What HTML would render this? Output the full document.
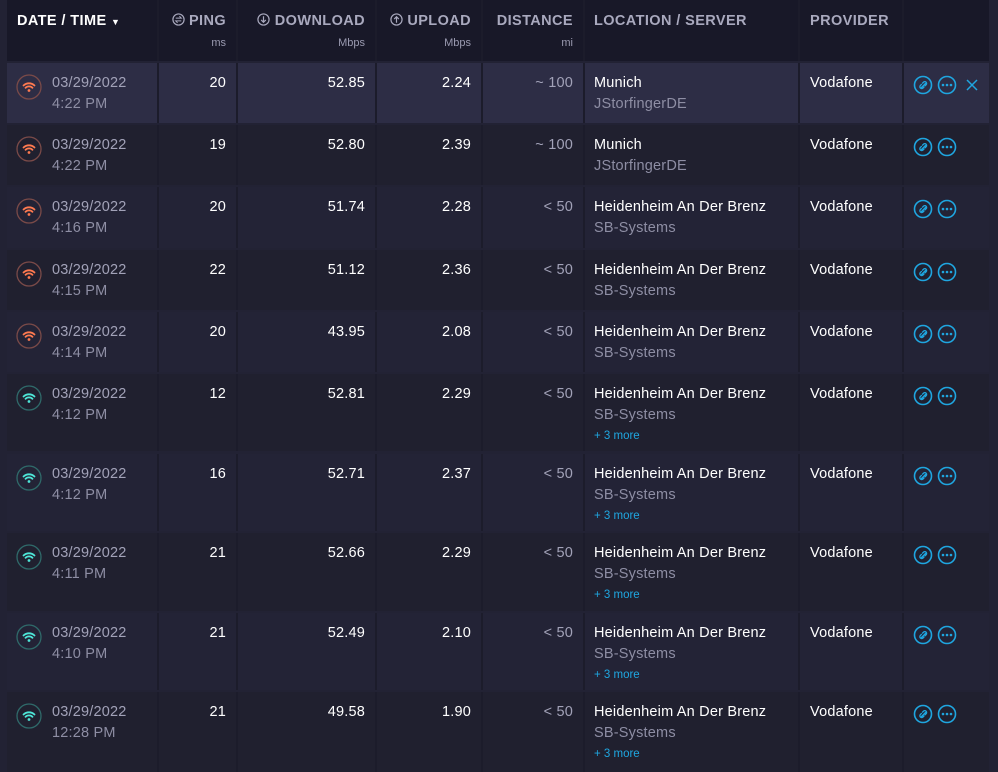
<!DOCTYPE html>
<html><head><meta charset="utf-8"><style>
*{box-sizing:border-box;margin:0;padding:0}
body{width:998px;height:766px;overflow:hidden;background:#222234;font-family:"Liberation Sans",sans-serif;position:relative}
.row{position:absolute;left:7px;width:982px;display:flex;gap:2px;background:#1c1c2b}
.row>div{position:relative;height:100%;background:#22223a}
.row.d>div{background:#20202f}
.row.l>div{background:#232336}
.row.hl>div{background:#2d2d45}
.hd>div{background:#181828!important}
.c1{width:150px}.c2{width:77px}.c3{width:137px}.c4{width:104px}.c5{width:100px}.c6{width:213px}.c7{width:102px}.c8{width:85px}
.h{position:absolute;top:13px;font-weight:bold;font-size:14.5px;color:#a9a9be;letter-spacing:.4px;white-space:nowrap}
.u{position:absolute;top:37px;right:10px;font-size:11px;color:#9a9ab0}
.r{right:10px}
.v{position:absolute;top:12px;font-size:14.5px;color:#fff;white-space:nowrap;letter-spacing:.2px}
.g{color:#a2a2b8}
.s{position:absolute;top:33px;font-size:14.5px;color:#8e8ea4;white-space:nowrap;letter-spacing:.2px}
.m{position:absolute;top:56px;left:9px;font-size:11.5px;color:#1fa6e0}
.ic{position:absolute;left:9px;top:11px}
.ac{position:absolute;left:9px;top:12px}
</style></head><body>
<svg width="0" height="0" style="position:absolute"><defs>
<g id="wo"><circle cx="13" cy="13" r="12" fill="none" stroke="#7a4a48" stroke-width="1.3"/><path d="M7.5 11.5a8 8 0 0 1 11 0M9.5 13.8a5 5 0 0 1 7 0" stroke="#ff7a50" stroke-width="1.8" fill="none" stroke-linecap="round"/><circle cx="13" cy="16.5" r="1.4" fill="#ff7a50"/></g>
<g id="wt"><circle cx="13" cy="13" r="12" fill="none" stroke="#2f6a6a" stroke-width="1.3"/><path d="M7.5 11.5a8 8 0 0 1 11 0M9.5 13.8a5 5 0 0 1 7 0" stroke="#4ee6d8" stroke-width="1.8" fill="none" stroke-linecap="round"/><circle cx="13" cy="16.5" r="1.4" fill="#4ee6d8"/></g>
<g id="ac"><circle cx="10" cy="10" r="8.5" fill="none" stroke="#1fa6e0" stroke-width="1.6"/><path d="M8.5 12.5l4-4M9.5 8.2l1-1a1.8 1.8 0 0 1 2.6 2.6l-1 1M11 12l-1 1a1.8 1.8 0 0 1-2.6-2.6l1-1" stroke="#1fa6e0" stroke-width="1.3" fill="none" stroke-linecap="round"/><circle cx="34" cy="10" r="8.5" fill="none" stroke="#1fa6e0" stroke-width="1.6"/><circle cx="30" cy="10" r="1.3" fill="#1fa6e0"/><circle cx="34" cy="10" r="1.3" fill="#1fa6e0"/><circle cx="38" cy="10" r="1.3" fill="#1fa6e0"/></g>
</defs></svg>

<div class="row hd" style="top:0;height:61px">
<div class="c1"><span class="h" style="left:10px;color:#fff">DATE / TIME <span style="font-size:9px">▼</span></span></div>
<div class="c2"><span class="h r"><svg width="13" height="13" viewBox="0 0 14 14" style="vertical-align:-1px"><circle cx="7" cy="7" r="6" fill="none" stroke="#a9a9be" stroke-width="1.3"/><path d="M4 5.5h6l-2-2M10 8.5H4l2 2" stroke="#a9a9be" stroke-width="1.1" fill="none"/></svg> PING</span><span class="u">ms</span></div>
<div class="c3"><span class="h r"><svg width="13" height="13" viewBox="0 0 14 14" style="vertical-align:-1px"><circle cx="7" cy="7" r="6" fill="none" stroke="#a9a9be" stroke-width="1.3"/><path d="M7 3.5v6M4.5 7.5L7 10l2.5-2.5" stroke="#a9a9be" stroke-width="1.3" fill="none"/></svg> DOWNLOAD</span><span class="u">Mbps</span></div>
<div class="c4"><span class="h r"><svg width="13" height="13" viewBox="0 0 14 14" style="vertical-align:-1px"><circle cx="7" cy="7" r="6" fill="none" stroke="#a9a9be" stroke-width="1.3"/><path d="M7 10.5v-6M4.5 6.5L7 4l2.5 2.5" stroke="#a9a9be" stroke-width="1.3" fill="none"/></svg> UPLOAD</span><span class="u">Mbps</span></div>
<div class="c5"><span class="h r">DISTANCE</span><span class="u">mi</span></div>
<div class="c6"><span class="h" style="left:9px">LOCATION / SERVER</span></div>
<div class="c7"><span class="h" style="left:10px">PROVIDER</span></div>
<div class="c8"></div>
</div>

<div class="row hl" style="top:63px;height:60px">
<div class="c1"><svg class="ic" width="26" height="26"><use href="#wo"/></svg><span class="v g" style="left:45px">03/29/2022</span><span class="s" style="left:45px">4:22 PM</span></div>
<div class="c2"><span class="v r">20</span></div><div class="c3"><span class="v r">52.85</span></div><div class="c4"><span class="v r">2.24</span></div><div class="c5"><span class="v r g">~ 100</span></div>
<div class="c6"><span class="v" style="left:9px">Munich</span><span class="s" style="left:9px">JStorfingerDE</span></div>
<div class="c7"><span class="v" style="left:10px">Vodafone</span></div>
<div class="c8"><svg class="ac" width="80" height="20"><use href="#ac"/><path d="M54 5l10 10M64 5l-10 10" stroke="#1fa6e0" stroke-width="1.5"/></svg></div>
</div>

<div class="row d" style="top:125px;height:60px">
<div class="c1"><svg class="ic" width="26" height="26"><use href="#wo"/></svg><span class="v g" style="left:45px">03/29/2022</span><span class="s" style="left:45px">4:22 PM</span></div>
<div class="c2"><span class="v r">19</span></div><div class="c3"><span class="v r">52.80</span></div><div class="c4"><span class="v r">2.39</span></div><div class="c5"><span class="v r g">~ 100</span></div>
<div class="c6"><span class="v" style="left:9px">Munich</span><span class="s" style="left:9px">JStorfingerDE</span></div>
<div class="c7"><span class="v" style="left:10px">Vodafone</span></div>
<div class="c8"><svg class="ac" width="80" height="20"><use href="#ac"/></svg></div>
</div>

<div class="row l" style="top:187px;height:61px">
<div class="c1"><svg class="ic" width="26" height="26"><use href="#wo"/></svg><span class="v g" style="left:45px">03/29/2022</span><span class="s" style="left:45px">4:16 PM</span></div>
<div class="c2"><span class="v r">20</span></div><div class="c3"><span class="v r">51.74</span></div><div class="c4"><span class="v r">2.28</span></div><div class="c5"><span class="v r g">&lt; 50</span></div>
<div class="c6"><span class="v" style="left:9px">Heidenheim An Der Brenz</span><span class="s" style="left:9px">SB-Systems</span></div>
<div class="c7"><span class="v" style="left:10px">Vodafone</span></div>
<div class="c8"><svg class="ac" width="80" height="20"><use href="#ac"/></svg></div>
</div>

<div class="row d" style="top:250px;height:60px">
<div class="c1"><svg class="ic" width="26" height="26"><use href="#wo"/></svg><span class="v g" style="left:45px">03/29/2022</span><span class="s" style="left:45px">4:15 PM</span></div>
<div class="c2"><span class="v r">22</span></div><div class="c3"><span class="v r">51.12</span></div><div class="c4"><span class="v r">2.36</span></div><div class="c5"><span class="v r g">&lt; 50</span></div>
<div class="c6"><span class="v" style="left:9px">Heidenheim An Der Brenz</span><span class="s" style="left:9px">SB-Systems</span></div>
<div class="c7"><span class="v" style="left:10px">Vodafone</span></div>
<div class="c8"><svg class="ac" width="80" height="20"><use href="#ac"/></svg></div>
</div>

<div class="row l" style="top:312px;height:60px">
<div class="c1"><svg class="ic" width="26" height="26"><use href="#wo"/></svg><span class="v g" style="left:45px">03/29/2022</span><span class="s" style="left:45px">4:14 PM</span></div>
<div class="c2"><span class="v r">20</span></div><div class="c3"><span class="v r">43.95</span></div><div class="c4"><span class="v r">2.08</span></div><div class="c5"><span class="v r g">&lt; 50</span></div>
<div class="c6"><span class="v" style="left:9px">Heidenheim An Der Brenz</span><span class="s" style="left:9px">SB-Systems</span></div>
<div class="c7"><span class="v" style="left:10px">Vodafone</span></div>
<div class="c8"><svg class="ac" width="80" height="20"><use href="#ac"/></svg></div>
</div>

<div class="row d" style="top:374px;height:77px">
<div class="c1"><svg class="ic" width="26" height="26"><use href="#wt"/></svg><span class="v g" style="left:45px">03/29/2022</span><span class="s" style="left:45px">4:12 PM</span></div>
<div class="c2"><span class="v r">12</span></div><div class="c3"><span class="v r">52.81</span></div><div class="c4"><span class="v r">2.29</span></div><div class="c5"><span class="v r g">&lt; 50</span></div>
<div class="c6"><span class="v" style="left:9px">Heidenheim An Der Brenz</span><span class="s" style="left:9px">SB-Systems</span><span class="m">+ 3 more</span></div>
<div class="c7"><span class="v" style="left:10px">Vodafone</span></div>
<div class="c8"><svg class="ac" width="80" height="20"><use href="#ac"/></svg></div>
</div>

<div class="row l" style="top:454px;height:77px">
<div class="c1"><svg class="ic" width="26" height="26"><use href="#wt"/></svg><span class="v g" style="left:45px">03/29/2022</span><span class="s" style="left:45px">4:12 PM</span></div>
<div class="c2"><span class="v r">16</span></div><div class="c3"><span class="v r">52.71</span></div><div class="c4"><span class="v r">2.37</span></div><div class="c5"><span class="v r g">&lt; 50</span></div>
<div class="c6"><span class="v" style="left:9px">Heidenheim An Der Brenz</span><span class="s" style="left:9px">SB-Systems</span><span class="m">+ 3 more</span></div>
<div class="c7"><span class="v" style="left:10px">Vodafone</span></div>
<div class="c8"><svg class="ac" width="80" height="20"><use href="#ac"/></svg></div>
</div>

<div class="row d" style="top:533px;height:78px">
<div class="c1"><svg class="ic" width="26" height="26"><use href="#wt"/></svg><span class="v g" style="left:45px">03/29/2022</span><span class="s" style="left:45px">4:11 PM</span></div>
<div class="c2"><span class="v r">21</span></div><div class="c3"><span class="v r">52.66</span></div><div class="c4"><span class="v r">2.29</span></div><div class="c5"><span class="v r g">&lt; 50</span></div>
<div class="c6"><span class="v" style="left:9px">Heidenheim An Der Brenz</span><span class="s" style="left:9px">SB-Systems</span><span class="m">+ 3 more</span></div>
<div class="c7"><span class="v" style="left:10px">Vodafone</span></div>
<div class="c8"><svg class="ac" width="80" height="20"><use href="#ac"/></svg></div>
</div>

<div class="row l" style="top:613px;height:77px">
<div class="c1"><svg class="ic" width="26" height="26"><use href="#wt"/></svg><span class="v g" style="left:45px">03/29/2022</span><span class="s" style="left:45px">4:10 PM</span></div>
<div class="c2"><span class="v r">21</span></div><div class="c3"><span class="v r">52.49</span></div><div class="c4"><span class="v r">2.10</span></div><div class="c5"><span class="v r g">&lt; 50</span></div>
<div class="c6"><span class="v" style="left:9px">Heidenheim An Der Brenz</span><span class="s" style="left:9px">SB-Systems</span><span class="m">+ 3 more</span></div>
<div class="c7"><span class="v" style="left:10px">Vodafone</span></div>
<div class="c8"><svg class="ac" width="80" height="20"><use href="#ac"/></svg></div>
</div>

<div class="row d" style="top:692px;height:80px">
<div class="c1"><svg class="ic" width="26" height="26"><use href="#wt"/></svg><span class="v g" style="left:45px">03/29/2022</span><span class="s" style="left:45px">12:28 PM</span></div>
<div class="c2"><span class="v r">21</span></div><div class="c3"><span class="v r">49.58</span></div><div class="c4"><span class="v r">1.90</span></div><div class="c5"><span class="v r g">&lt; 50</span></div>
<div class="c6"><span class="v" style="left:9px">Heidenheim An Der Brenz</span><span class="s" style="left:9px">SB-Systems</span><span class="m">+ 3 more</span></div>
<div class="c7"><span class="v" style="left:10px">Vodafone</span></div>
<div class="c8"><svg class="ac" width="80" height="20"><use href="#ac"/></svg></div>
</div>
</body></html>
